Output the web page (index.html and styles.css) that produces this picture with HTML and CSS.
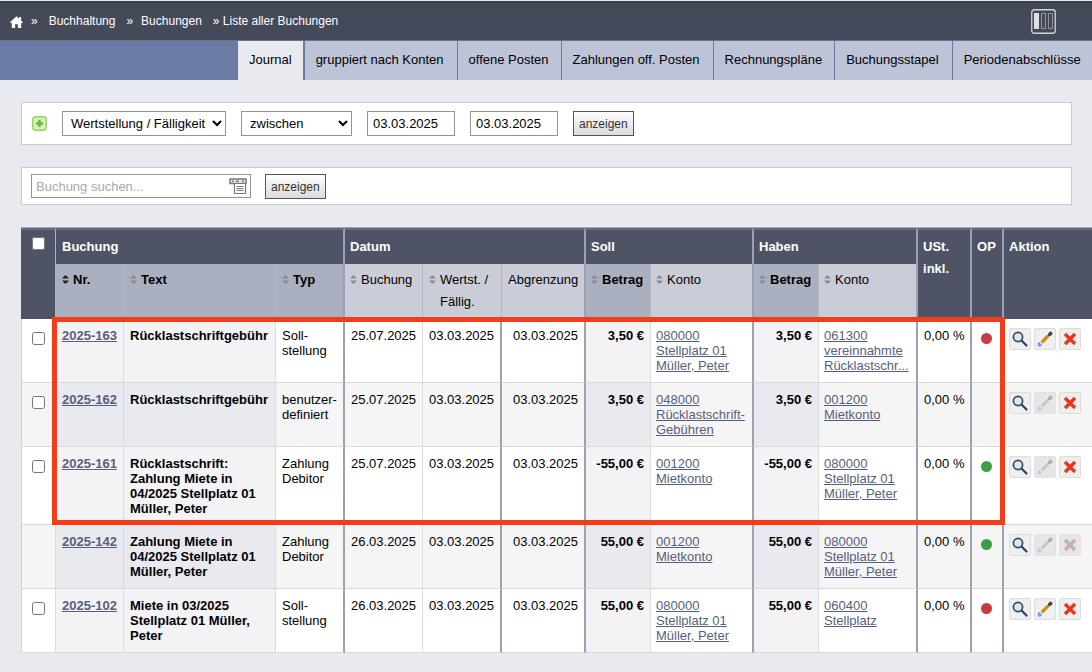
FILE: index.html
```html
<!DOCTYPE html>
<html lang="de">
<head>
  <meta charset="UTF-8">
  <meta name="viewport" content="width=device-width, initial-scale=1.0">
  <title>Liste aller Buchungen</title>
  <link rel="stylesheet" href="styles.css">
</head>
<body>

  <!-- Icons -->
  <svg class="defs" width="0" height="0" aria-hidden="true">
    <symbol id="sort" viewBox="0 0 7 9">
      <path class="up" d="M2.6 .5h1.8L6.8 3.6H.2z"/>
      <path class="down" d="M2.6 8.5h1.8l2.4-3.1H.2z"/>
    </symbol>
    <symbol id="view" viewBox="0 0 16 16">
      <path d="M9.5 9.5l5 5" stroke="#3d4658" stroke-width="2.4" fill="none" stroke-linecap="round"/>
      <circle cx="6" cy="6" r="4.6" fill="#d3e9f8" stroke="#3d4658" stroke-width="1.7"/>
    </symbol>
    <symbol id="edit" viewBox="0 0 16 16" fill="none">
      <path d="M3.2 12.8l9.6-9.6" stroke="#fff" stroke-width="5"/>
      <path d="M4.6 11.4l6.6-6.6" stroke="#c8901f" stroke-width="3.6"/>
      <path d="M12.6 3.4l1-1" stroke="#3d4658" stroke-width="3.6" stroke-linecap="round"/>
      <path d="M2.2 10.8l3 3-1.6 1.6H.8v-3.2z" fill="#7d97f7"/>
    </symbol>
    <symbol id="delete" viewBox="0 0 16 16">
      <path d="M3 3l10 10M13 3L3 13" stroke="#f0321a" stroke-width="3.4" fill="none"/>
    </symbol>
  </svg>

  <header>
    <nav class="breadcrumb" aria-label="Pfad">
      <a class="home" href="#" aria-label="Startseite">
        <svg width="13" height="12" viewBox="0 0 13 12"><path d="M6.5 .3 9.2 2.7V1h1.9v3.4L13 6.2l-.9 1-.9-.8V12H7.9V8.2H5.1V12H1.8V6.4l-.9.8-.9-1z" fill="#fff"/></svg>
      </a>
      <span class="crumb"><span>»</span><a href="#">Buchhaltung</a></span>
      <span class="crumb"><span>»</span><a href="#">Buchungen</a></span>
      <span class="crumb">» Liste aller Buchungen</span>
    </nav>
    <button class="columns" aria-label="Spalten">
      <svg width="25" height="25" viewBox="0 0 25 25" fill="none">
        <rect x=".75" y=".75" width="23.5" height="23.5" rx="2.5" stroke="#d0d3d9" stroke-width="1.3"/>
        <rect x="3" y="4" width="5" height="16" fill="#dfe1e5"/>
        <rect x="10.5" y="4.5" width="4" height="15" stroke="#8d929d"/>
        <rect x="17.5" y="4.5" width="4" height="15" stroke="#8d929d"/>
      </svg>
    </button>
  </header>

  <nav class="tabs" aria-label="Ansichten">
    <a class="active" href="#">Journal</a>
    <a href="#">gruppiert nach Konten</a>
    <a href="#">offene Posten</a>
    <a href="#">Zahlungen off. Posten</a>
    <a href="#">Rechnungspläne</a>
    <a href="#">Buchungsstapel</a>
    <a href="#">Periodenabschlüsse</a>
  </nav>

  <main>
    <form class="panel filter">
      <button type="button" class="add" aria-label="Filter hinzufügen">
        <svg width="16" height="16" viewBox="0 0 16 16">
          <rect x="1.7" y=".7" width="13.6" height="13.6" rx="3" fill="#c9f7a4" stroke="#9ccc7c" stroke-width="1.4"/>
          <path d="M8.5 4v7M5 7.5h7" stroke="#7aa765" stroke-width="2.4"/>
        </svg>
      </button>
      <select class="field" aria-label="Feld">
        <option>Wertstellung / Fälligkeit</option>
        <option>Buchung</option>
      </select>
      <select class="range" aria-label="Bereich">
        <option>zwischen</option>
        <option>vor</option>
        <option>nach</option>
      </select>
      <input class="date" type="text" value="03.03.2025" aria-label="von">
      <input class="date" type="text" value="03.03.2025" aria-label="bis">
      <button type="button" class="btn">anzeigen</button>
    </form>

    <form class="panel search">
      <div class="search-box">
        <input type="text" placeholder="Buchung suchen..." aria-label="Buchung suchen">
        <svg width="18" height="17" viewBox="0 0 18 17" fill="none" stroke="#777">
          <path d="M1 1h16v4.5H1z" fill="#eee" stroke-width="1.5"/>
          <path d="M3 3.2h2M7 3.2h3M13 3.2h2" stroke-width="1.5"/>
          <path d="M5.5 6v9.5h11V6" fill="#fff" stroke-width="1.2"/>
          <path d="M7.5 8.5h7M7.5 10.5h7M7.5 12.5h7"/>
        </svg>
      </div>
      <button type="button" class="btn">anzeigen</button>
    </form>

    <table>
      <colgroup>
        <col class="w-check"><col class="w-nr"><col class="w-text"><col class="w-typ">
        <col class="w-buchung"><col class="w-wert"><col class="w-abgr">
        <col class="w-betrag"><col class="w-soll"><col class="w-betrag"><col class="w-haben">
        <col class="w-ust"><col class="w-op"><col>
      </colgroup>
      <thead>
        <tr class="groups">
          <th rowspan="2" class="check"><input type="checkbox" aria-label="Alle auswählen"></th>
          <th colspan="3" class="group-end">Buchung</th>
          <th colspan="3" class="group-end">Datum</th>
          <th colspan="2" class="group-end">Soll</th>
          <th colspan="2" class="group-end">Haben</th>
          <th rowspan="2" class="group-end">USt. inkl.</th>
          <th rowspan="2" class="group-end">OP</th>
          <th rowspan="2" class="last">Aktion</th>
        </tr>
        <tr class="cols">
          <th class="sorted"><a class="desc" href="#"><svg><use href="#sort"/></svg>Nr.</a></th>
          <th class="sorted"><a href="#"><svg><use href="#sort"/></svg>Text</a></th>
          <th class="sorted group-end"><a href="#"><svg><use href="#sort"/></svg>Typ</a></th>
          <th><a href="#"><svg><use href="#sort"/></svg>Buchung</a></th>
          <th><a href="#"><svg><use href="#sort"/></svg>Wertst. / Fällig.</a></th>
          <th class="group-end">Abgrenzung</th>
          <th class="sorted"><a href="#"><svg><use href="#sort"/></svg>Betrag</a></th>
          <th class="group-end konto"><a href="#"><svg><use href="#sort"/></svg>Konto</a></th>
          <th class="sorted"><a href="#"><svg><use href="#sort"/></svg>Betrag</a></th>
          <th class="group-end konto"><a href="#"><svg><use href="#sort"/></svg>Konto</a></th>
        </tr>
      </thead>
      <tbody class="marked">
        <tr>
          <td class="check"><input type="checkbox" aria-label="2025-163 auswählen"></td>
          <td class="key"><a href="#">2025-163</a></td>
          <td class="key">Rücklastschriftgebühr</td>
          <td class="group-end">Soll-stellung</td>
          <td class="num">25.07.2025</td>
          <td class="num group-end">03.03.2025</td>
          <td class="num group-end">03.03.2025</td>
          <td class="key num">3,50 €</td>
          <td class="konto group-end"><a href="#">080000 Stellplatz 01 Müller, Peter</a></td>
          <td class="key num">3,50 €</td>
          <td class="konto group-end"><a href="#">061300 vereinnahmte Rücklastschr...</a></td>
          <td class="num group-end">0,00 %</td>
          <td class="op group-end"><span class="dot red"></span></td>
          <td class="actions">
            <div>
              <button aria-label="Ansehen"><svg><use href="#view"/></svg></button>
              <button aria-label="Bearbeiten"><svg><use href="#edit"/></svg></button>
              <button aria-label="Löschen"><svg><use href="#delete"/></svg></button>
            </div>
          </td>
        </tr>
        <tr class="even">
          <td class="check"><input type="checkbox" aria-label="2025-162 auswählen"></td>
          <td class="key"><a href="#">2025-162</a></td>
          <td class="key">Rücklastschriftgebühr</td>
          <td class="group-end">benutzer-definiert</td>
          <td class="num">25.07.2025</td>
          <td class="num group-end">03.03.2025</td>
          <td class="num group-end">03.03.2025</td>
          <td class="key num">3,50 €</td>
          <td class="konto group-end"><a href="#">048000 Rücklastschrift-Gebühren</a></td>
          <td class="key num">3,50 €</td>
          <td class="konto group-end"><a href="#">001200 Mietkonto</a></td>
          <td class="num group-end">0,00 %</td>
          <td class="op group-end"></td>
          <td class="actions">
            <div>
              <button aria-label="Ansehen"><svg><use href="#view"/></svg></button>
              <button aria-label="Bearbeiten" disabled><svg><use href="#edit"/></svg></button>
              <button aria-label="Löschen"><svg><use href="#delete"/></svg></button>
            </div>
          </td>
        </tr>
        <tr>
          <td class="check"><input type="checkbox" aria-label="2025-161 auswählen"></td>
          <td class="key"><a href="#">2025-161</a></td>
          <td class="key">Rücklastschrift: Zahlung Miete in 04/2025 Stellplatz 01 Müller, Peter</td>
          <td class="group-end">Zahlung Debitor</td>
          <td class="num">25.07.2025</td>
          <td class="num group-end">03.03.2025</td>
          <td class="num group-end">03.03.2025</td>
          <td class="key num">-55,00 €</td>
          <td class="konto group-end"><a href="#">001200 Mietkonto</a></td>
          <td class="key num">-55,00 €</td>
          <td class="konto group-end"><a href="#">080000 Stellplatz 01 Müller, Peter</a></td>
          <td class="num group-end">0,00 %</td>
          <td class="op group-end"><span class="dot green"></span></td>
          <td class="actions">
            <div>
              <button aria-label="Ansehen"><svg><use href="#view"/></svg></button>
              <button aria-label="Bearbeiten" disabled><svg><use href="#edit"/></svg></button>
              <button aria-label="Löschen"><svg><use href="#delete"/></svg></button>
            </div>
          </td>
        </tr>
      </tbody>
      <tbody>
        <tr class="even">
          <td class="check"></td>
          <td class="key"><a href="#">2025-142</a></td>
          <td class="key">Zahlung Miete in 04/2025 Stellplatz 01 Müller, Peter</td>
          <td class="group-end">Zahlung Debitor</td>
          <td class="num">26.03.2025</td>
          <td class="num group-end">03.03.2025</td>
          <td class="num group-end">03.03.2025</td>
          <td class="key num">55,00 €</td>
          <td class="konto group-end"><a href="#">001200 Mietkonto</a></td>
          <td class="key num">55,00 €</td>
          <td class="konto group-end"><a href="#">080000 Stellplatz 01 Müller, Peter</a></td>
          <td class="num group-end">0,00 %</td>
          <td class="op group-end"><span class="dot green"></span></td>
          <td class="actions">
            <div>
              <button aria-label="Ansehen"><svg><use href="#view"/></svg></button>
              <button aria-label="Bearbeiten" disabled><svg><use href="#edit"/></svg></button>
              <button aria-label="Löschen" disabled><svg><use href="#delete"/></svg></button>
            </div>
          </td>
        </tr>
        <tr>
          <td class="check"><input type="checkbox" aria-label="2025-102 auswählen"></td>
          <td class="key"><a href="#">2025-102</a></td>
          <td class="key">Miete in 03/2025 Stellplatz 01 Müller, Peter</td>
          <td class="group-end">Soll-stellung</td>
          <td class="num">26.03.2025</td>
          <td class="num group-end">03.03.2025</td>
          <td class="num group-end">03.03.2025</td>
          <td class="key num">55,00 €</td>
          <td class="konto group-end"><a href="#">080000 Stellplatz 01 Müller, Peter</a></td>
          <td class="key num">55,00 €</td>
          <td class="konto group-end"><a href="#">060400 Stellplatz</a></td>
          <td class="num group-end">0,00 %</td>
          <td class="op group-end"><span class="dot red"></span></td>
          <td class="actions">
            <div>
              <button aria-label="Ansehen"><svg><use href="#view"/></svg></button>
              <button aria-label="Bearbeiten"><svg><use href="#edit"/></svg></button>
              <button aria-label="Löschen"><svg><use href="#delete"/></svg></button>
            </div>
          </td>
        </tr>
      </tbody>
    </table>
  </main>

</body>
</html>
```
FILE: styles.css
```css
*, *::after {
  box-sizing: border-box;
}

body {
  margin: 0;
  padding-top: 1px;
  font-family: Arial, "Liberation Sans", sans-serif;
  font-size: 13px;
  line-height: 15px;
  color: #000;
  background: #e9eaef;
}

.defs {
  position: absolute;
}

button, input, select {
  font-family: inherit;
  font-size: 13px;
  margin: 0;
}

header {
  height: 40px;
  padding: 0 36px 0 10px;
  background: #444a59;
  border-top: 2px solid #34434a;
  border-bottom: 1px solid #697389;
  display: flex;
  justify-content: space-between;
  align-items: center;
}

.breadcrumb {
  display: flex;
  align-items: center;
  gap: 11px;
  font-size: 12px;
  color: white;
}

.breadcrumb a {
  color: white;
  text-decoration: none;
}

.home {
  display: flex;
  margin-right: -3px;
}

.crumb span {
  margin-right: 8px;
}

.home + .crumb span {
  margin-right: 11px;
}

.columns, .add {
  padding: 0;
  border: none;
  background: none;
  display: flex;
  cursor: pointer;
}

.tabs {
  display: flex;
  gap: 1px;
  height: 39px;
  padding-left: 238px;
  background: #6b7ca4;
}

.tabs a {
  padding: 11px 12px 0 11px;
  background: #bec4d8;
  color: #000;
  text-decoration: none;
  white-space: nowrap;
}

.tabs a.active {
  margin-right: 1px;
  padding-right: 11px;
  background: #e9eaef;
}

.tabs a:nth-child(even) {
  padding-right: 13px;
}

.tabs a:last-child {
  flex: 1;
}

main {
  padding: 22px 0 19px 21px;
}

.panel {
  display: flex;
  margin: 0 20px 22px 0;
  background: white;
  border: 1px solid #c7ccd8;
}

.filter {
  gap: 15px;
  padding: 8px 9px;
  align-items: center;
}

.search {
  gap: 14px;
  padding: 6px 9px 5px;
}

select, input[type="text"] {
  height: 25px;
  border: 1px solid #949494;
  border-radius: 0;
  background: white;
  color: #000;
}

select {
  padding: 0 0 0 4px;
}

.field {
  width: 164px;
}

.range {
  width: 111px;
}

.date {
  width: 88px;
  padding: 0 5px;
}

.btn {
  height: 25px;
  padding: 0 5px;
  border: 1px solid #555;
  background: linear-gradient(#fff, #dcdada);
  color: #333;
  font-size: 12px;
  cursor: pointer;
}

.search-box {
  position: relative;
}

.search-box input {
  width: 220px;
  height: 24px;
  padding: 0 26px 0 4px;
}

.search-box input::placeholder {
  color: #a9a9a9;
}

.search-box svg {
  position: absolute;
  right: 4px;
  top: 4px;
}

/* Tabelle */
table {
  width: 100%;
  min-width: 1071px;
  table-layout: fixed;
  border-collapse: separate;
  border-spacing: 0;
  border-top: 1px solid #a2a6b0;
}

.w-check { width: 35px; }
.w-nr { width: 68px; }
.w-text { width: 152px; }
.w-typ { width: 69px; }
.w-buchung { width: 78px; }
.w-wert { width: 79px; }
.w-abgr { width: 84px; }
.w-betrag { width: 65px; }
.w-soll { width: 103px; }
.w-haben { width: 99px; }
.w-ust { width: 54px; }
.w-op { width: 32px; }

th, td {
  text-align: left;
  vertical-align: top;
}

th {
  line-height: 22px;
}

.groups {
  height: 36px;
}

.groups th {
  padding: 6px 5px 4px 6px;
  background: #4e5466;
  border-top: 2px solid #656b7b;
  border-right: 1px solid #b3b6be;
  color: white;
}

.groups .group-end + th {
  padding-left: 5px;
}

.groups th.last {
  border-right: none;
}

.cols {
  height: 55px;
}

.cols th {
  padding: 5px 6px;
  background: #cacdd7;
  border-right: 1px solid #b5b7bc;
  font-weight: normal;
}

.cols th.sorted {
  background: #aab0bf;
  font-weight: bold;
}

.cols .group-end + th {
  padding-left: 5px;
}

.cols a {
  display: flex;
  gap: 4px;
  color: #000;
  text-decoration: none;
}

.cols svg {
  flex: none;
  width: 7px;
  height: 9px;
  margin-top: 6px;
  fill: #8a8d95;
}

.cols .desc svg {
  fill: #222;
}

td {
  padding: 9px 6px 8px;
  background: white;
  border-right: 1px solid #dcdcdc;
  border-bottom: 1px solid #d8d8da;
}

tbody tr {
  height: 64px;
}

.even td {
  background: #f5f5f5;
}

td.key {
  background: #f3f3f6;
  font-weight: bold;
}

.even td.key {
  background: #e9eaf0;
}

td a {
  color: #555f80;
}

.num {
  text-align: right;
  white-space: nowrap;
}

th.group-end, .cols th.group-end, td.group-end {
  border-right: 2px solid #99a1b3;
}

.cols th.konto, td.konto {
  padding-left: 5px;
  padding-right: 5px;
}

td.check {
  border-left: 1px solid #d0d2d8;
  padding-top: 13px;
}

.check input {
  display: block;
  width: 13px;
  height: 13px;
  margin: 0 auto;
}

.groups th.check {
  padding-top: 7px;
}

td.op {
  padding: 14px 6px 0 5px;
}

.dot {
  display: block;
  width: 11px;
  height: 11px;
  margin: 0 auto;
  border-radius: 50%;
}

.red { background: #c93b41; }
.green { background: #3f9d43; }

td.actions {
  padding: 9px 0 0 5px;
  border-right: none;
}

.actions div {
  display: flex;
  gap: 3px;
}

.actions button {
  display: flex;
  width: 22px;
  height: 22px;
  padding: 2px;
  background: #efefef;
  border: 1px solid #dcdcdc;
  border-radius: 2px;
  cursor: pointer;
}

.actions svg {
  width: 16px;
  height: 16px;
}

.actions button:disabled {
  background: #e5e5e5;
  border-color: #e2e2e2;
}

.actions button:disabled svg {
  opacity: 0.35;
  filter: grayscale(70%);
}

/* Hervorgehobene Buchungen */
.marked {
  position: relative;
}

.marked::after {
  content: "";
  position: absolute;
  top: -2px;
  bottom: 0;
  left: 31px;
  width: 953px;
  border: 5px solid #f33c1a;
  pointer-events: none;
}
```
